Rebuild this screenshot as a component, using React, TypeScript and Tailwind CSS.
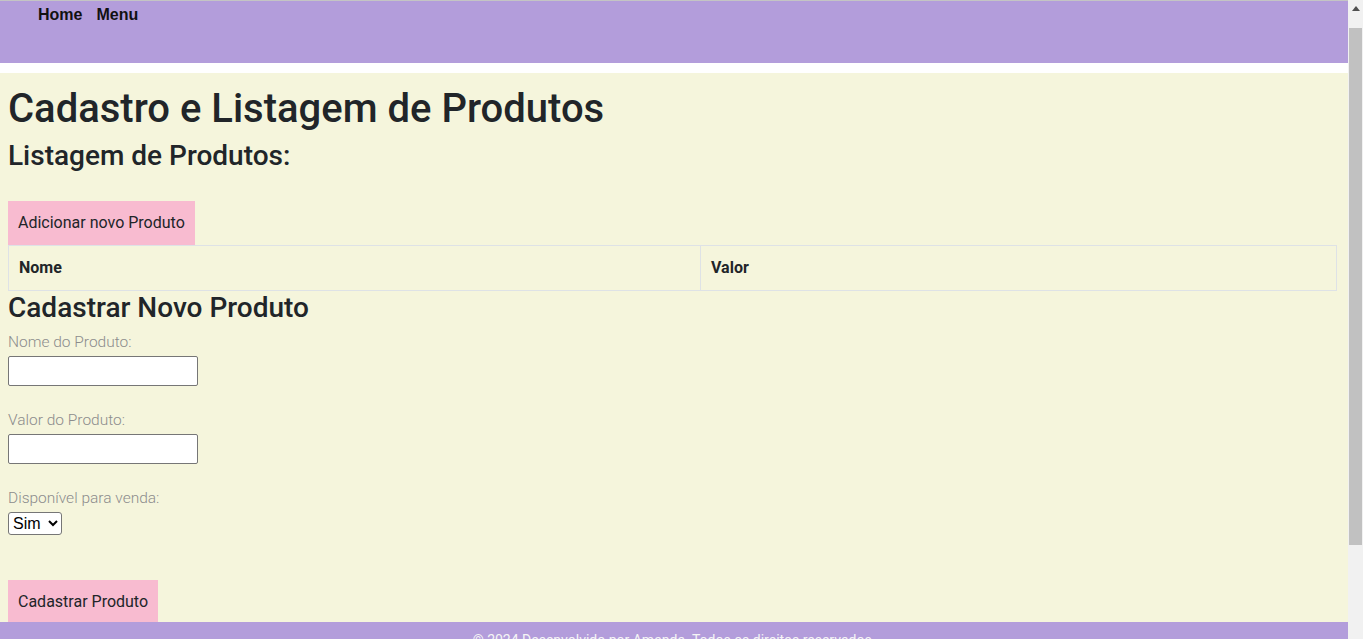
import React from "react";

function FakeScrollbar() {
  return (
    <div className="flex h-full w-[15px] shrink-0 flex-col items-center bg-[#f1f1f1]">
      <div className="flex h-[17px] w-full items-center justify-center">
        <svg width="8" height="5" viewBox="0 0 8 5">
          <polygon points="0,5 8,5 4,0" fill="#505050" />
        </svg>
      </div>
      <div className="mt-[11px] h-[517px] w-[13px] bg-[#c1c1c1]" />
    </div>
  );
}

export default function App() {
  return (
    <div className="flex h-screen overflow-hidden bg-white font-['Roboto',sans-serif] text-[#212529]">
      <div className="min-w-0 flex-1 overflow-hidden">
        <header className="h-[63px] border-t border-[#c4c4c4] bg-[#b39ddb] pt-[5px]">
          <nav className="flex gap-[14px] pl-[38px] font-['Liberation_Sans',Arial,sans-serif] text-[16px] font-bold leading-[18px] text-[#111]">
            <a href="#">Home</a>
            <a href="#">Menu</a>
          </nav>
        </header>
        <main className="mt-[10px] bg-[#f5f5dc] pl-[8px] pr-[11px] pt-[12px]">
          <h1 className="mb-[6px] text-[40px] font-medium leading-[48px]">Cadastro e Listagem de Produtos</h1>
          <h3 className="mb-[28px] text-[28px] font-medium leading-[33.6px]">Listagem de Produtos:</h3>
          <button className="bg-[#f8bbd0] px-[10px] py-[10px] text-[16px] leading-6 text-[#212529]">Adicionar novo Produto</button>
          <table className="w-full border-collapse border border-[#dee2e6] text-left">
            <thead>
              <tr>
                <th className="w-[692px] border border-[#dee2e6] px-[10px] py-[10px] text-[16px] font-bold leading-6">Nome</th>
                <th className="border border-[#dee2e6] px-[10px] py-[10px] text-[16px] font-bold leading-6">Valor</th>
              </tr>
            </thead>
            <tbody></tbody>
          </table>
          <h3 className="mb-[8px] text-[28px] font-medium leading-[33.6px]">Cadastrar Novo Produto</h3>
          <form className="flex flex-col items-start">
            <label className="mb-[3px] text-[15.5px] font-light leading-[21px] text-[#8c8c8c]">Nome do Produto:</label>
            <input type="text" className="mb-[24px] h-[30px] w-[190px] rounded-[2px] border border-[#767676] bg-white" />
            <label className="mb-[3px] text-[15.5px] font-light leading-[21px] text-[#8c8c8c]">Valor do Produto:</label>
            <input type="text" className="mb-[24px] h-[30px] w-[190px] rounded-[2px] border border-[#767676] bg-white" />
            <label className="mb-[3px] text-[15.5px] font-light leading-[21px] text-[#8c8c8c]">Disponível para venda:</label>
            <select className="h-[23px] w-[54px] rounded-[3px] border border-[#767676] bg-white font-['Liberation_Sans',Arial,sans-serif] text-[16px] text-black">
              <option>Sim</option>
              <option>Não</option>
            </select>
            <button type="button" className="mt-[45px] h-[42px] bg-[#f8bbd0] px-[10px] pt-[2px] text-[16px] leading-6 text-[#212529]">Cadastrar Produto</button>
          </form>
        </main>
        <footer className="h-[126px] bg-[#b39ddb] pt-[8px] text-center text-[14px] leading-5 text-[#f5f5f5]">
          © 2024 Desenvolvido por Amanda. Todos os direitos reservados.
        </footer>
      </div>
      <FakeScrollbar />
    </div>
  );
}
